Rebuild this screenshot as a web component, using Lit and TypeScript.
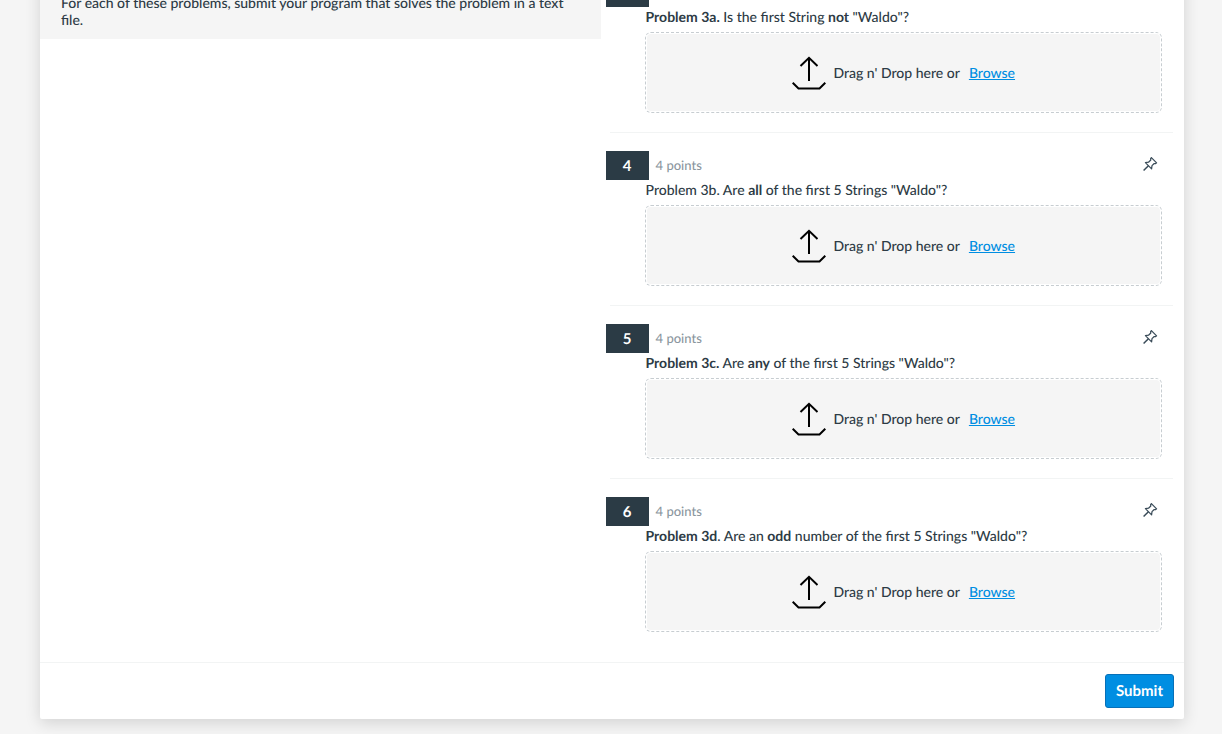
import { LitElement, html, css } from "lit";
import { customElement, property } from "lit/decorators.js";

@customElement("quiz-question")
class QuizQuestion extends LitElement {
  @property({ type: Number }) number = 0;
  @property({ type: Number }) points = 0;

  static styles = css`
    :host {
      display: block;
      border-bottom: 1px solid #f2f4f4;
      padding: 18px 11px 19px 0;
    }
    :host([last]) {
      border-bottom-color: transparent;
    }
    .head {
      display: flex;
      align-items: center;
      margin-left: -4px;
      height: 29px;
    }
    .badge {
      width: 43px;
      line-height: 30px;
      height: 29px;
      background: #2b3b45;
      color: #fff;
      text-align: center;
      font-size: 15px;
      font-weight: 700;
    }
    .points {
      flex: 1;
      margin-left: 7px;
      font-size: 13px;
      color: #8b969e;
    }
    button {
      all: unset;
      display: flex;
      cursor: pointer;
      margin-right: 4px;
      padding-bottom: 4px;
    }
    .pin {
      width: 16px;
      height: 16px;
    }
    .body {
      margin-left: 35px;
    }
    .prompt {
      padding: 0 1px 5px;
      line-height: 20px;
    }
    .drop {
      box-sizing: border-box;
      display: flex;
      align-items: center;
      justify-content: center;
      height: 81px;
      border: 1px dashed #c7cdd1;
      border-radius: 6px;
      background: #f5f5f5 padding-box;
      box-shadow: inset 0 0 0 1px #fff;
    }
    .upload {
      width: 34px;
      height: 34px;
      margin-right: 8px;
    }
    a {
      color: #008ee2;
      margin-left: 9px;
    }
  `;

  render() {
    return html`
      <div class="head">
        <div class="badge">${this.number}</div>
        <div class="points">${this.points} points</div>
        <button aria-label="Pin question ${this.number}">
          <svg class="pin" viewBox="0 0 16 16" fill="none" stroke="#394b58" stroke-width="1.2" stroke-linejoin="round">
            <path d="M9.4 1.6 14.6 6.8 13.4 7.7 12.2 7.5 10 9.7 9.6 12.8 3.4 6.6 6.5 6.2 8.8 4 8.6 2.7Z" />
            <path d="M6.4 9.7 1.6 14.5" stroke-width="1.5" />
          </svg>
        </button>
      </div>
      <div class="body">
        <div class="prompt"><slot></slot></div>
        <div class="drop">
          <svg class="upload" viewBox="0 0 34 34" fill="none" stroke="#000" stroke-width="2">
            <path d="M17 25V2M8.5 10 17 1.8 25.5 10M.7 26.7 6.5 32.5H27.5L33.3 26.7" />
          </svg>
          <span>Drag n' Drop here or</span>
          <a href="#">Browse</a>
        </div>
      </div>
    `;
  }
}

@customElement("app-root")
class AppRoot extends LitElement {
  static styles = css`
    :host {
      box-sizing: border-box;
      display: flex;
      flex-direction: column;
      justify-content: flex-end;
      height: 100vh;
      overflow: hidden;
      padding: 0 38px 15px 40px;
      background: #f5f5f5;
      font: 500 14px/17px Lato, "Liberation Sans", sans-serif;
      text-rendering: geometricPrecision;
      color: #2d3b45;
    }
    .card {
      background: #fff;
      border-radius: 2px;
      box-shadow: 0 4px 16px rgba(0, 0, 0, 0.14);
    }
    .columns {
      display: grid;
      grid-template-columns: 49fr 51fr;
      align-items: start;
    }
    .intro {
      background: #f5f5f5;
      padding: 34px 21px 11px;
    }
    .questions {
      padding: 0 11px 10px 9px;
    }
    .footer {
      display: flex;
      justify-content: flex-end;
      border-top: 1px solid #f2f4f4;
      padding: 11px 10px;
    }
    b {
      font-weight: 700;
    }
    .submit {
      height: 34px;
      padding: 0 10px;
      border: 1px solid #0770b8;
      border-radius: 3px;
      background: #008ee2;
      color: #fff;
      font: inherit;
      text-rendering: inherit;
      font-size: 15px;
      font-weight: 700;
      cursor: pointer;
    }
  `;

  render() {
    return html`
      <main class="card">
        <div class="columns">
          <div class="intro">
            For each of these problems, submit your program that solves the problem in a text file.
          </div>
          <div class="questions">
            <quiz-question number="3" points="4">
              <b>Problem 3a.</b> Is the first String <b>not</b> "Waldo"?
            </quiz-question>
            <quiz-question number="4" points="4">
              Problem 3b. Are <b>all</b> of the first 5 Strings "Waldo"?
            </quiz-question>
            <quiz-question number="5" points="4">
              <b>Problem 3c.</b> Are <b>any</b> of the first 5 Strings "Waldo"?
            </quiz-question>
            <quiz-question number="6" points="4" last>
              <b>Problem 3d</b>. Are an <b>odd</b> number of the first 5 Strings "Waldo"?
            </quiz-question>
          </div>
        </div>
        <div class="footer">
          <button class="submit">Submit</button>
        </div>
      </main>
    `;
  }
}
